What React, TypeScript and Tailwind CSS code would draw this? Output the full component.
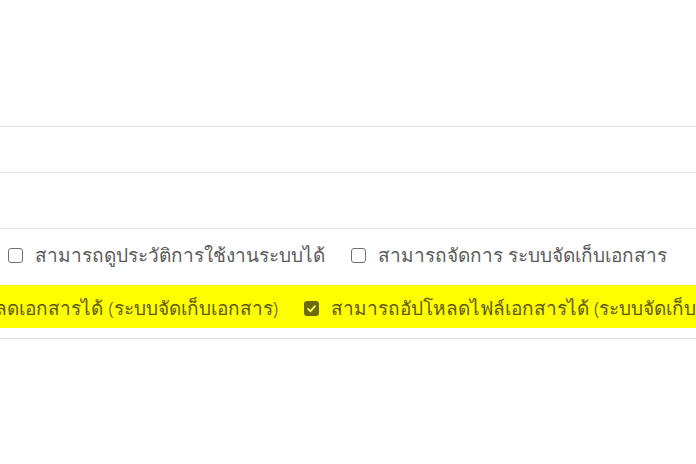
import React from "react";

// แถวสิทธิ์การใช้งาน (ตัดมาจากตารางสิทธิ์) — บรรทัดที่สองถูกไฮไลต์สีเหลือง

const font = { fontFamily: '"Noto Sans", "DejaVu Sans", sans-serif' };

function Box({ checked = false }: { checked?: boolean }) {
  if (checked) {
    return (
      <span className="flex h-[15px] w-[15px] flex-none items-center justify-center rounded-[3px] bg-[#6b6a08]">
        <svg viewBox="0 0 16 16" className="h-[11px] w-[11px]" fill="none">
          <path
            d="M3 8.5 6.5 12 13 4.5"
            stroke="#ffff66"
            strokeWidth="2.6"
            strokeLinecap="round"
            strokeLinejoin="round"
          />
        </svg>
      </span>
    );
  }
  return (
    <span className="block h-[15px] w-[15px] flex-none rounded-[3px] border border-[#707070] bg-white" />
  );
}

function Item({
  label,
  checked,
}: {
  label: string;
  checked?: boolean;
}) {
  return (
    <label className="flex flex-none items-center gap-[12px] whitespace-nowrap">
      <Box checked={checked} />
      <span>{label}</span>
    </label>
  );
}

export default function App() {
  return (
    <div
      className="h-[464px] w-[696px] overflow-hidden bg-white text-[19px] font-light text-[#5b5b5b]"
      style={font}
    >
      <div className="h-[127px] border-b border-[#e2e2e2]" />
      <div className="h-[46px] border-b border-[#e2e2e2]" />
      <div className="h-[56px] border-b border-[#e2e2e2]" />

      <div className="border-b border-[#e2e2e2]">
        {/* บรรทัดแรก */}
        <div className="flex h-[56px] items-center gap-[26px] pb-[3px] pl-[8px]">
          <Item label="สามารถดูประวัติการใช้งานระบบได้" />
          <Item label="สามารถจัดการ ระบบจัดเก็บเอกสาร" />
        </div>

        {/* บรรทัดที่สอง (ไฮไลต์) */}
        <div className="flex h-[43px] items-center bg-[#ffff00] pt-[3px] text-[#5f5a08]">
          <div className="flex w-[304px] flex-none justify-end overflow-hidden pr-[26px]">
            <Item label="สามารถดาวน์โหลดเอกสารได้ (ระบบจัดเก็บเอกสาร)" checked />
          </div>
          <Item label="สามารถอัปโหลดไฟล์เอกสารได้ (ระบบจัดเก็บเอกสาร)" checked />
        </div>

        <div className="h-[10px]" />
      </div>
    </div>
  );
}
